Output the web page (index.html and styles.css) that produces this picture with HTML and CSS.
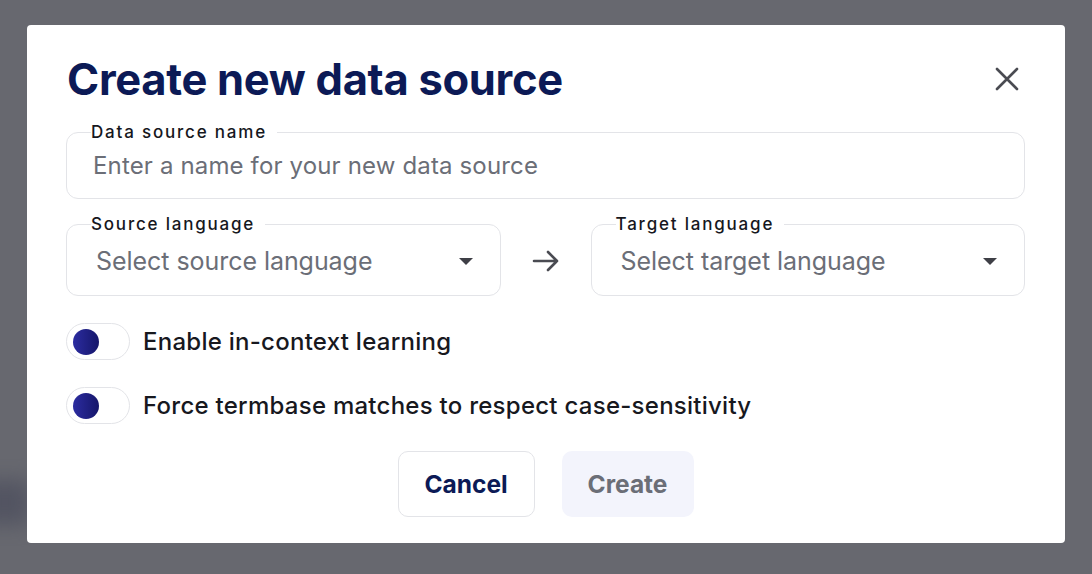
FILE: index.html
```html
<!DOCTYPE html>
<html>
<head>
<meta charset="utf-8">
<link rel="stylesheet" href="styles.css">
</head>
<body>
<div class="bg-blob"></div>
<div class="modal">
  <div class="header">
    <h1 class="title">Create new data source</h1>
    <button class="close" aria-label="Close">
      <svg width="24" height="24" viewBox="0 0 24 24"><path d="M2 2 L22 22 M22 2 L2 22" stroke="#4a4b52" stroke-width="2.6" stroke-linecap="round" fill="none"/></svg>
    </button>
  </div>
  <fieldset class="field">
    <legend>Data source name</legend>
    <div class="placeholder">Enter a name for your new data source</div>
  </fieldset>
  <div class="lang-row">
    <fieldset class="field select">
      <legend>Source language</legend>
      <div class="placeholder sel">Select source language</div>
      <span class="caret"></span>
    </fieldset>
    <div class="arrow">
      <svg width="28" height="24" viewBox="0 0 28 24"><path d="M2 12 H25 M16 3 L25 12 L16 21" stroke="#4a4b52" stroke-width="2.6" stroke-linecap="round" stroke-linejoin="round" fill="none"/></svg>
    </div>
    <fieldset class="field select">
      <legend>Target language</legend>
      <div class="placeholder sel">Select target language</div>
      <span class="caret"></span>
    </fieldset>
  </div>
  <div class="toggle-row">
    <span class="toggle"><span class="knob"></span></span>
    <span class="toggle-label">Enable in-context learning</span>
  </div>
  <div class="toggle-row">
    <span class="toggle"><span class="knob"></span></span>
    <span class="toggle-label">Force termbase matches to respect case-sensitivity</span>
  </div>
  <div class="actions">
    <button class="btn cancel">Cancel</button>
    <button class="btn create">Create</button>
  </div>
</div>
</body>
</html>
```
FILE: styles.css
```css
* { box-sizing: border-box; }
html, body { margin: 0; padding: 0; }
body {
  width: 1092px;
  height: 574px;
  background: #67686f;
  font-family: Inter, "Noto Sans", sans-serif;
  padding: 25px 27px 0 27px;
  position: relative;
  overflow: hidden;
}
.bg-blob {
  position: absolute;
  left: -20px;
  top: 480px;
  width: 50px;
  height: 45px;
  background: #4a4c5c;
  filter: blur(10px);
  opacity: 0.7;
}
.modal {
  position: relative;
  width: 1038px;
  height: 518px;
  background: #fff;
  border-radius: 4px;
  padding: 26px 40px 0 39px;
}
.header {
  display: flex;
  justify-content: space-between;
  align-items: center;
  height: 56px;
}
.title {
  margin: 0;
  font-size: 43.5px;
  font-weight: 700;
  color: #0c1a56;
  letter-spacing: -0.3px;
  padding-left: 1px;
}
.close {
  border: 0;
  background: none;
  padding: 0;
  margin-right: 6px;
  width: 24px;
  height: 24px;
  display: flex;
}
.field {
  margin: 0;
  margin-top: 16px;
  border: 1px solid #e3e4e8;
  border-radius: 12px;
  padding: 0 26px;
  height: 76px;
  position: relative;
}
.field legend {
  padding: 0 0 0 0;
  margin-left: -2px;
  padding-right: 10px;
  font-size: 17px;
  line-height: 19px;
  letter-spacing: 1.8px;
  color: #16171d;
  font-weight: 500;
}
.placeholder {
  font-size: 24px;
  color: #6b6e77;
  line-height: 30px;
  margin-top: 9px;
  letter-spacing: 0.15px;
}
.lang-row {
  display: flex;
  align-items: center;
  margin-top: 16px;
}
.lang-row .field { margin-top: 0; flex: 1; height: 81px; }
.placeholder.sel { margin-left: 3px; margin-top: 12px; font-size: 25px; letter-spacing: -0.05px; }
.caret {
  position: absolute;
  right: 27px;
  top: 24px;
  width: 0; height: 0;
  border-left: 7px solid transparent;
  border-right: 7px solid transparent;
  border-top: 7px solid #3e3f46;
}
.arrow {
  width: 90px;
  display: flex;
  justify-content: center;
  padding-top: 10px;
}
.toggle-row {
  display: flex;
  align-items: center;
  margin-top: 27px;
}
.toggle-row + .toggle-row { margin-top: 27px; }
.toggle {
  width: 64px;
  height: 37px;
  border: 1px solid #e3e4e8;
  border-radius: 19px;
  display: flex;
  align-items: center;
  padding-left: 6px;
}
.knob {
  width: 26px; height: 26px;
  border-radius: 50%;
  background: linear-gradient(90deg, #2c2ca0, #15166a);
}
.toggle-label {
  margin-left: 13px;
  font-size: 24px;
  color: #17181e;
  font-weight: 500;
  letter-spacing: 0.26px;
}
.actions {
  display: flex;
  justify-content: center;
  gap: 27px;
  margin-top: 27px;
}
.btn {
  height: 66px;
  border-radius: 10px;
  font-family: inherit;
  font-size: 24.5px;
  font-weight: 700;
}
.cancel {
  width: 137px;
  background: #fff;
  border: 1px solid #e3e4e8;
  color: #0c1a56;
}
.create {
  width: 132px;
  background: #f3f4fc;
  border: 0;
  color: #6b6e77;
}
```
